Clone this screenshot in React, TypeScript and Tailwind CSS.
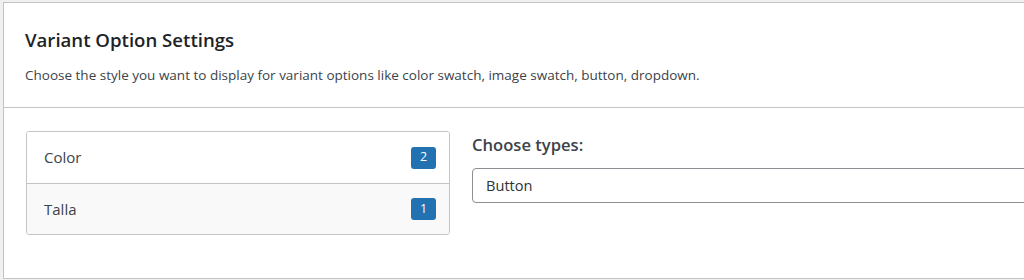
import React from "react";

interface OptionItem {
  label: string;
  count: number;
}

const options: OptionItem[] = [
  { label: "Color", count: 2 },
  { label: "Talla", count: 1 },
];

export default function App() {
  return (
    <div className="w-[1024px] h-[280px] overflow-hidden bg-[#f0f0f1] pt-[2px] pl-[3px] font-['Open_Sans',sans-serif]">
      {/* Card */}
      <div className="w-[1080px] h-[277px] bg-white border border-[#c3c4c7]">
        {/* Header */}
        <div className="h-[105px] px-[21px] pt-[25px] border-b border-[#c3c4c7]">
          <h2 className="text-[18.6px] leading-[24px] font-semibold text-[#1d2327]">
            Variant Option Settings
          </h2>
          <p className="mt-[13px] text-[13.5px] leading-[20px] text-[#3c434a]">
            Choose the style you want to display for variant options like color swatch, image swatch, button, dropdown.
          </p>
        </div>

        {/* Body */}
        <div className="flex gap-[22px] pl-[22px] pt-[23px]">
          <div className="w-[424px] border border-[#c3c4c7] rounded-[3px] overflow-hidden">
            {options.map((item, i) => (
              <div
                key={item.label}
                className={`flex items-center justify-between h-[51px] pl-[17px] pr-[13px] ${
                  i > 0 ? "border-t border-[#c3c4c7] bg-[#f9f9f9]" : "bg-white"
                }`}
              >
                <span className="text-[15px] text-[#3c434a]">{item.label}</span>
                <span className="w-[25px] h-[22px] rounded-[3px] bg-[#2271b1] text-white text-[12.5px] flex items-center justify-center">
                  {item.count}
                </span>
              </div>
            ))}
          </div>

          <div className="flex-1 pt-[3px]">
            <label className="block text-[16.6px] leading-[22px] font-semibold text-[#3c434a]">
              Choose types:
            </label>
            <div className="mt-[12px] h-[35px] border border-[#8c8f94] rounded-[4px] flex items-center pl-[13px] text-[14.6px] text-[#2c3338]">
              Button
            </div>
          </div>
        </div>
      </div>
    </div>
  );
}
